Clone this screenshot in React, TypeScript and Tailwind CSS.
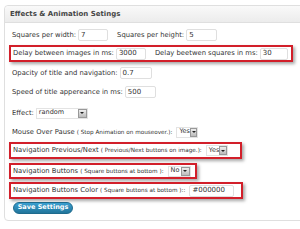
import React from "react";

function TextBox({ value, w }: { value: string; w: string }) {
  return (
    <span
      className={`ml-[2px] inline-flex h-[12px] shrink-0 items-center rounded-[2px] border border-[#dfdfdf] bg-white pl-[2px] text-[7px] text-[#333] ${w}`}
    >
      {value}
    </span>
  );
}

function Select({ value, w }: { value: string; w: string }) {
  return (
    <span
      className={`ml-[2px] inline-flex h-[11px] shrink-0 items-center justify-between border border-[#e3e3e3] bg-white pl-[2px] text-[6.5px] text-[#333] ${w}`}
    >
      {value}
      <span className="flex h-[9px] w-[9px] items-center justify-center border border-[#999] bg-gradient-to-b from-[#eee] to-[#bbb]">
        <span className="h-0 w-0 border-x-[2px] border-t-[2px] border-x-transparent border-t-[#222]" />
      </span>
    </span>
  );
}

function Hint({ children }: { children: React.ReactNode }) {
  return <span className="mx-[2px] shrink-0 text-[5.7px] text-[#333]">{children}</span>;
}

function Box({ w, h, children }: { w: string; h: string; children: React.ReactNode }) {
  return (
    <div
      className={`-ml-[3px] flex items-center whitespace-nowrap border-2 border-[#d21f2a] pl-[2px] shadow-[2px_2px_3px_rgba(0,0,0,0.35)] ${w} ${h}`}
    >
      {children}
    </div>
  );
}

export default function App() {
  return (
    <div
      className="h-[229px] w-[300px] overflow-hidden bg-white pl-[4px] pt-[5px] text-[6.8px] text-[#333]"
      style={{ fontFamily: '"DejaVu Sans", Verdana, sans-serif' }}
    >
      <div className="h-[216px] w-[310px] rounded-[4px] border border-[#dfdfdf] bg-white">
        <div className="flex h-[17px] items-center rounded-t-[4px] border-b border-[#dfdfdf] bg-gradient-to-b from-[#f9f9f9] to-[#ececec] pl-[5px] text-[7px] font-bold text-[#464646]">
          Effects &amp; Animation Setings
        </div>
        <div className="flex flex-col whitespace-nowrap pl-[7px]">
          <div className="mt-[6px] flex h-[12px] items-center">
            <span>Squares per width:</span>
            <TextBox value="7" w="w-[30px]" />
            <span className="ml-[9px]">Squares per height:</span>
            <TextBox value="5" w="w-[31px]" />
          </div>
          <div className="mt-[4px]">
            <Box w="w-[284px]" h="h-[17px]">
              <span className="shrink-0">Delay between images in ms:</span>
              <TextBox value="3000" w="w-[30px]" />
              <span className="ml-[9px] shrink-0">Delay beetwen squares in ms:</span>
              <TextBox value="30" w="w-[28px]" />
            </Box>
          </div>
          <div className="mt-[5px] flex h-[12px] items-center">
            <span>Opacity of title and navigation:</span>
            <TextBox value="0.7" w="w-[32px]" />
          </div>
          <div className="mt-[7px] flex h-[12px] items-center">
            <span>Speed of title appereance in ms:</span>
            <TextBox value="500" w="w-[31px]" />
          </div>
          <div className="mt-[9px] flex h-[12px] items-center">
            <span>Effect:</span>
            <Select value="random" w="w-[52px]" />
          </div>
          <div className="mt-[7px] flex h-[12px] items-center">
            <span>Mouse Over Pause</span>
            <Hint>( Stop Animation on mouseover.):</Hint>
            <Select value="Yes" w="w-[22px]" />
          </div>
          <div className="mt-[4px]">
            <Box w="w-[233px]" h="h-[17px]">
              <span>Navigation Previous/Next</span>
              <Hint>( Previous/Next buttons on image.):</Hint>
              <Select value="Yes" w="w-[22px]" />
            </Box>
          </div>
          <div className="mt-[4px]">
            <Box w="w-[188px]" h="h-[16px]">
              <span>Navigation Buttons</span>
              <Hint>( Square buttons at bottom ):</Hint>
              <Select value="No" w="w-[23px]" />
            </Box>
          </div>
          <div className="mt-[3px]">
            <Box w="w-[234px]" h="h-[17px]">
              <span>Navigation Buttons Color</span>
              <Hint>( Square buttons at bottom )::</Hint>
              <TextBox value="#000000" w="w-[45px]" />
            </Box>
          </div>
          <div className="ml-[1px] mt-[3px]">
            <button className="flex h-[12px] w-[60px] items-center justify-center rounded-full border border-[#1e6a8d] bg-gradient-to-b from-[#3a9fd0] to-[#21759b] text-[6.5px] font-bold text-white">
              Save Settings
            </button>
          </div>
        </div>
      </div>
    </div>
  );
}
